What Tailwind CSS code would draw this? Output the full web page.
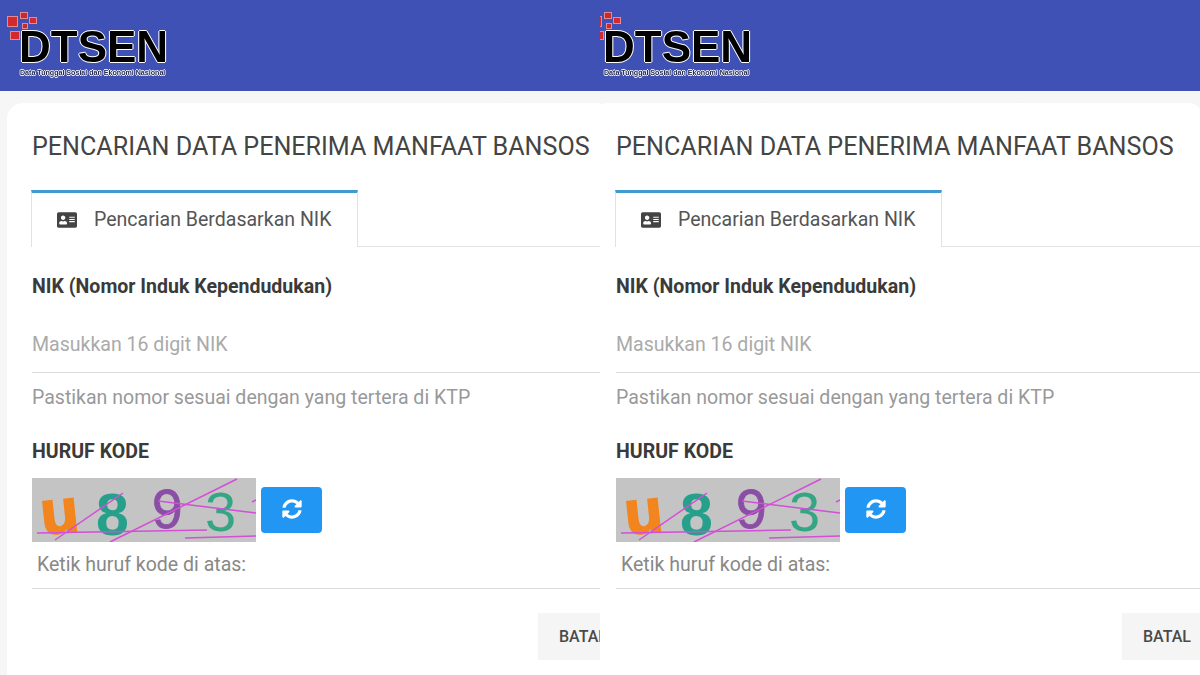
<!DOCTYPE html>
<html lang="id">
<head>
  <meta charset="UTF-8" />
  <meta name="viewport" content="width=device-width, initial-scale=1.0" />
  <title>DTSEN Cek Bansos</title>
  <script src="https://cdn.jsdelivr.net/npm/@tailwindcss/browser@4"></script>
</head>
<body class="w-[1200px] h-[675px] overflow-hidden bg-[#f3f3f3] font-['Roboto',sans-serif]">
  <div class="flex">
    <div id="left" class="w-[600px] h-[675px] overflow-hidden"></div>
    <div id="right" class="w-[600px] h-[675px] overflow-hidden"></div>
  </div>

  <template id="screen">
    <div class="w-[620px] h-[675px] bg-gradient-to-b from-[#e6e6e6] to-[#f6f6f6] to-[20px]">
      <!-- Header -->
      <header class="h-[91px] bg-[#3f51b5] pl-[19px] pt-[25px]">
        <div class="relative w-[150px] blur-[0.3px]">
          <svg class="absolute left-[-12px] top-[-13px] w-[32px] h-[32px]" viewBox="0 0 32 32">
            <rect x="0.5" y="4.5" width="10" height="10" fill="#d42a2e" stroke="#e58b8f" stroke-width="1" />
            <rect x="13.5" y="0.5" width="7" height="6" fill="#c9282e" stroke="#e58b8f" stroke-width="1" />
            <rect x="22.5" y="5.5" width="7" height="6" fill="#d42a2e" stroke="#e58b8f" stroke-width="1" />
            <rect x="15.5" y="11.5" width="5" height="5" fill="#c9282e" stroke="#e58b8f" stroke-width="1" />
            <rect x="3.5" y="19.5" width="9" height="8" fill="#d42a2e" stroke="#e58b8f" stroke-width="1" />
          </svg>
          <div class="relative font-['Liberation_Sans',sans-serif] font-bold text-[44px] leading-[44px] text-black [text-shadow:1px_0_0_#fff,-1px_0_0_#fff,0_1px_0_#fff,0_-1px_0_#fff]">DTSEN</div>
          <div class="whitespace-nowrap pl-px font-['Liberation_Sans',sans-serif] font-bold text-[7.1px] leading-[9px] text-[#23284f] [text-shadow:0.7px_0_0_#fff,-0.7px_0_0_#fff,0_0.7px_0_#fff,0_-0.7px_0_#fff]">Data Tunggal Sosial dan Ekonomi Nasional</div>
        </div>
      </header>

      <!-- Card -->
      <main class="mt-3 ml-[7px] h-[590px] rounded-2xl bg-white pl-[25px] pt-[29px]">
        <h1 class="whitespace-nowrap text-[25.1px] leading-[30px] text-[#444]">PENCARIAN DATA PENERIMA MANFAAT BANSOS</h1>

        <div class="mt-[28px] flex -ml-px">
          <div class="flex h-[57px] w-[327px] items-center border-x border-t-[3px] border-x-[#e2e2e2] border-t-[#3f9bcf] pl-[25px]">
            <svg class="w-5 h-[18px] text-[#444]" viewBox="0 0 576 512" fill="currentColor">
              <path d="M528 32H48C21.5 32 0 53.5 0 80v352c0 26.5 21.5 48 48 48h480c26.5 0 48-21.5 48-48V80c0-26.5-21.5-48-48-48zm-352 96c35.3 0 64 28.7 64 64s-28.7 64-64 64-64-28.7-64-64 28.7-64 64-64zm112 236.8c0 10.6-10 19.2-22.4 19.2H86.4C74 384 64 375.4 64 364.8v-19.2c0-31.8 30.1-57.6 67.2-57.6h5c12.3 5.1 25.7 8 39.8 8s27.6-2.9 39.8-8h5c37.1 0 67.2 25.8 67.2 57.6v19.2zM512 312c0 4.4-3.6 8-8 8H360c-4.4 0-8-3.6-8-8v-16c0-4.4 3.6-8 8-8h144c4.4 0 8 3.6 8 8v16zm0-64c0 4.4-3.6 8-8 8H360c-4.4 0-8-3.6-8-8v-16c0-4.4 3.6-8 8-8h144c4.4 0 8 3.6 8 8v16zm0-64c0 4.4-3.6 8-8 8H360c-4.4 0-8-3.6-8-8v-16c0-4.4 3.6-8 8-8h144c4.4 0 8 3.6 8 8v16z" />
            </svg>
            <span class="ml-[17px] whitespace-nowrap text-[19.55px] text-[#555]">Pencarian Berdasarkan NIK</span>
          </div>
          <div class="flex-1 border-b border-[#e2e2e2]"></div>
        </div>

        <label class="mt-[28px] block text-[19.55px] leading-6 font-bold text-[#3a3a3a]">NIK (Nomor Induk Kependudukan)</label>
        <div class="mt-[32px] border-b border-[#dcdcdc] pb-[13px] text-[19.55px] leading-[28px] text-[#aaa]">Masukkan 16 digit NIK</div>
        <p class="mt-[13px] text-[19.55px] leading-6 text-[#999]">Pastikan nomor sesuai dengan yang tertera di KTP</p>

        <label class="mt-[30px] block text-[19.55px] leading-6 font-bold text-[#3a3a3a]">HURUF KODE</label>
        <div class="mt-[14px] flex items-center gap-[5px]">
          <svg class="h-16 w-56 bg-[#c4c4c4]" viewBox="0 0 224 64">
            <g class="blur-[0.4px]">
              <text x="9" y="55" font-family="Liberation Sans" font-weight="700" font-size="62" fill="#f2851e" stroke="#f2851e" stroke-width="2" transform="rotate(-6 27 40)">u</text>
              <text x="64" y="57" font-family="Liberation Sans" font-weight="700" font-size="59" fill="#26a08a">8</text>
              <text x="120" y="50" font-family="Liberation Sans" font-size="55" fill="#8a4fa5" stroke="#8a4fa5" stroke-width="0.8">9</text>
              <text x="173" y="53" font-family="Liberation Sans" font-size="56" fill="#35a585">3</text>
              <g stroke="#d24fd6" stroke-width="1.5" fill="none">
                <path d="M5 55 175 52" />
                <path d="M23 62 91 15" />
                <path d="M78 64 205 1" />
                <path d="M126 23 224 35" />
                <path d="M153 60 224 58" />
                <path d="M220 24 224 22" />
              </g>
            </g>
          </svg>
          <button class="flex h-[46px] w-[61px] items-center justify-center rounded bg-[#2196f3] pb-[2px] text-white">
            <svg class="w-5 h-5" viewBox="0 0 512 512" fill="currentColor">
              <path d="M370.72 133.28C339.458 104.008 298.888 87.962 255.848 88c-77.458.068-144.328 53.178-162.791 126.85-1.344 5.363-6.122 9.15-11.651 9.15H24.103c-7.498 0-13.194-6.807-11.807-14.176C33.933 94.924 134.813 8 256 8c66.448 0 126.791 26.136 171.315 68.685L463.03 40.97C478.149 25.851 504 36.559 504 57.941V192c0 13.255-10.745 24-24 24H345.941c-21.382 0-32.09-25.851-16.971-40.971l41.75-41.749zM32 296h134.059c21.382 0 32.09 25.851 16.971 40.971l-41.75 41.75c31.262 29.273 71.835 45.319 114.876 45.28 77.418-.07 144.315-53.144 162.787-126.849 1.344-5.363 6.122-9.15 11.651-9.15h57.304c7.498 0 13.194 6.807 11.807 14.176C478.067 417.076 377.187 504 256 504c-66.448 0-126.791-26.136-171.315-68.685L48.97 471.03C33.851 486.149 8 475.441 8 454.059V320c0-13.255 10.745-24 24-24z" />
            </svg>
          </button>
        </div>
        <div class="mt-[11px] border-b border-[#dcdcdc] pb-[11px] pl-[5px] text-[19.55px] leading-6 text-[#888]">Ketik huruf kode di atas:</div>

        <button class="mt-6 ml-[506px] h-[47px] w-[90px] bg-[#f5f5f5] text-center text-[16px] font-medium text-[#4a4a4a]">BATAL</button>
      </main>
    </div>
  </template>

  <script>
    // Same capture twice; the second one is cropped 16px further in
    const screen = document.getElementById("screen");
    document.getElementById("left").appendChild(screen.content.cloneNode(true));
    const copy = screen.content.cloneNode(true);
    copy.firstElementChild.classList.add("-ml-4");
    document.getElementById("right").appendChild(copy);
  </script>
</body>
</html>
